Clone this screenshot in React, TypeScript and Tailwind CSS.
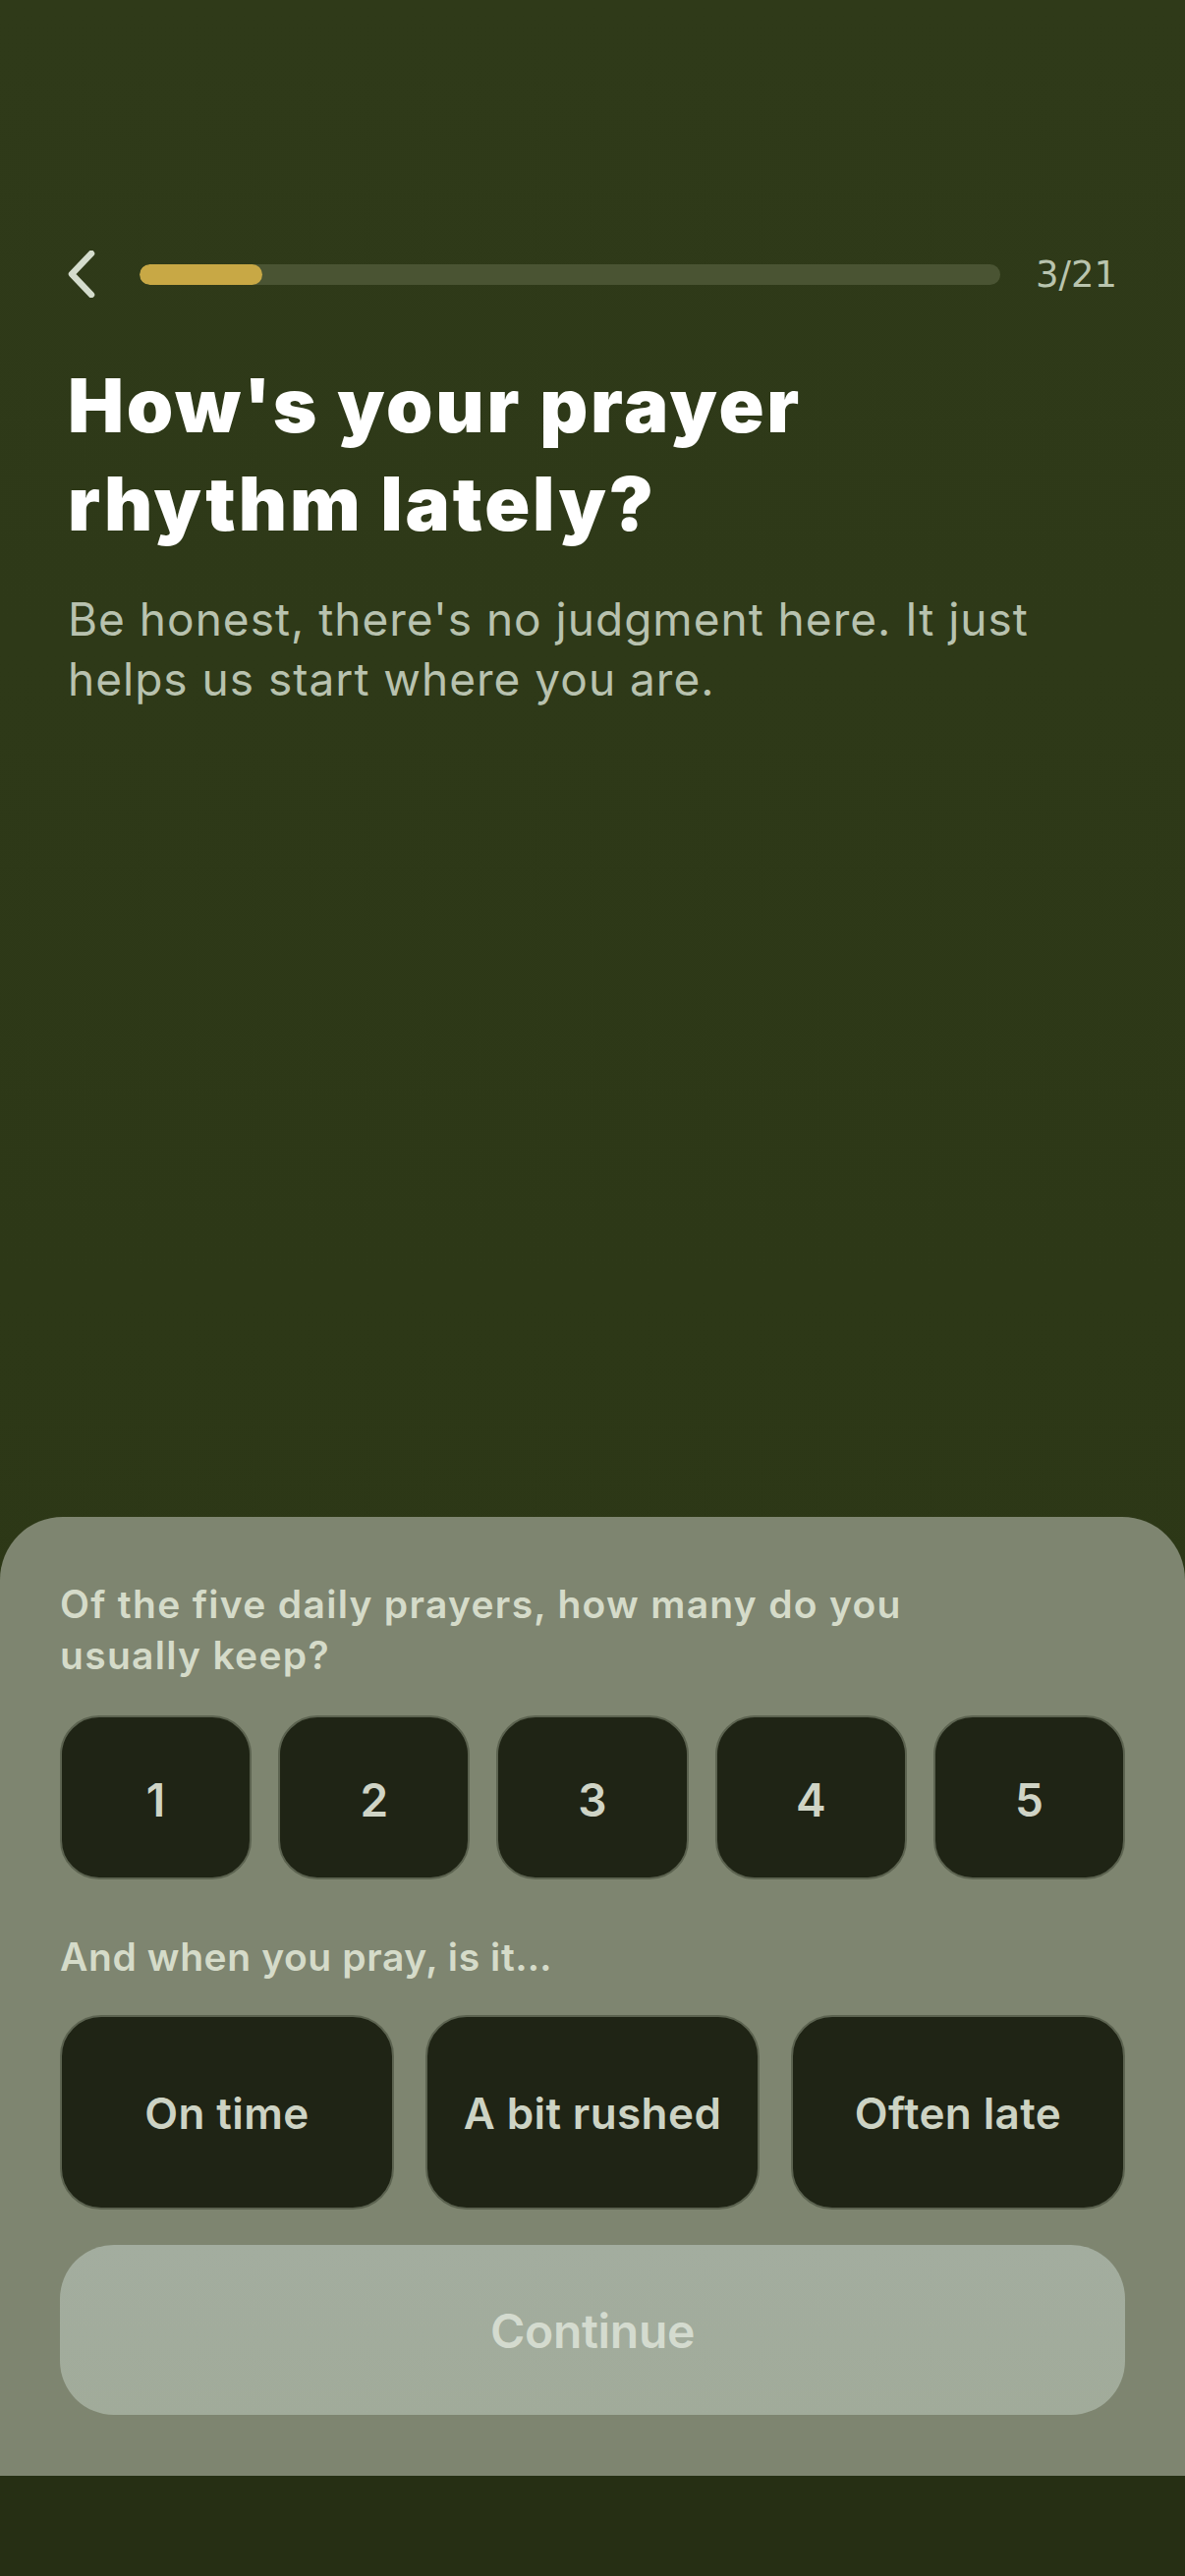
import React from "react";

const body = { fontFamily: "Inter, 'Noto Sans', sans-serif" };

export default function App() {
  const nums = ["1", "2", "3", "4", "5"];
  const opts = ["On time", "A bit rushed", "Often late"];
  return (
    <div
      className="w-[1206px] h-[2622px] flex flex-col bg-gradient-to-b from-[#2f3a19] to-[#2b3615] overflow-hidden"
      style={body}
    >
      <div className="px-[69px] pt-[256px] flex flex-col">
        <div className="flex items-center h-[46px]">
          <svg width="30" height="48" viewBox="0 0 30 48" className="shrink-0 -ml-[1px]">
            <path
              d="M25 3 L5 24 L25 45"
              fill="none"
              stroke="#d4dccd"
              strokeWidth="6.5"
              strokeLinecap="round"
              strokeLinejoin="round"
            />
          </svg>
          <div className="ml-[44px] flex-1 h-[21px] rounded-full bg-[#4a5433] overflow-hidden">
            <div className="h-full w-[125px] rounded-full bg-[#c8a845]" />
          </div>
          <div
            className="ml-[36px] text-[37px] leading-none text-[#b9c4ae]"
            style={{ fontFamily: "'DejaVu Sans', sans-serif" }}
          >
            3/21
          </div>
        </div>
        <h1 className="mt-[60px] text-[76px] leading-[100px] font-black text-white tracking-[2.8px]">
          How's your prayer
          <br />
          rhythm lately?
        </h1>
        <p className="mt-[38px] text-[46px] leading-[61px] text-[#b8c2af] tracking-[1px]">
          Be honest, there's no judgment here. It just
          <br />
          helps us start where you are.
        </p>
      </div>

      <div className="mt-auto">
        <div className="h-[976px] rounded-t-[64px] bg-[#7e8570] px-[61px] pt-[63px] pb-[61px] flex flex-col">
          <p className="text-[39px] leading-[52px] font-semibold text-[#d5dbc9] tracking-[1.3px]">
            Of the five daily prayers, how many do you
            <br />
            usually keep?
          </p>
          <div className="mt-[35px] grid grid-cols-5 gap-[27px]">
            {nums.map((n) => (
              <div
                key={n}
                className="h-[167px] rounded-[40px] bg-[#1f2415] border-2 border-[#5c6350] flex items-center justify-center pt-[5px] text-[46px] font-semibold text-[#cfd4c6]"
              >
                {n}
              </div>
            ))}
          </div>
          <p className="mt-[53px] text-[39px] leading-[52px] font-semibold text-[#d5dbc9] tracking-[0.6px]">
            And when you pray, is it…
          </p>
          <div className="mt-[33px] grid grid-cols-3 gap-[32px]">
            {opts.map((o) => (
              <div
                key={o}
                className="h-[198px] rounded-[42px] bg-[#1f2415] border-2 border-[#5c6350] flex items-center justify-center pt-[2px] text-[44px] font-semibold text-[#cdd3c4] tracking-[0.4px]"
              >
                {o}
              </div>
            ))}
          </div>
          <div className="mt-[36px] h-[173px] rounded-[55px] bg-gradient-to-b from-[#a3ad9f] to-[#a1ab9a] flex items-center justify-center pt-[2px] text-[48px] font-semibold text-[#d4dbcf] tracking-[-0.3px]">
            Continue
          </div>
        </div>
        <div className="h-[102px] bg-[#262f14]" />
      </div>
    </div>
  );
}
